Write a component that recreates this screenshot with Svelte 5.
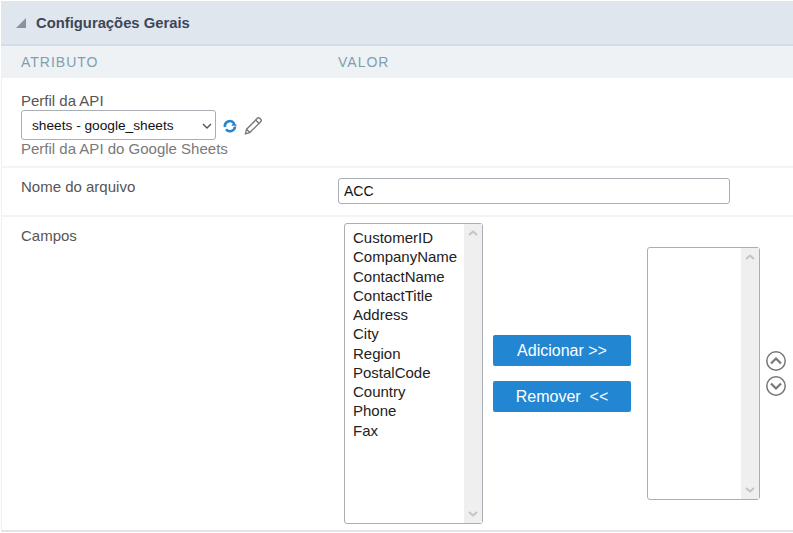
<script lang="ts">
    const fields = [
        "CustomerID",
        "CompanyName",
        "ContactName",
        "ContactTitle",
        "Address",
        "City",
        "Region",
        "PostalCode",
        "Country",
        "Phone",
        "Fax",
    ];
</script>

{#snippet scrollbar()}
    <div class="scrollbar">
        <svg width="10" height="6" viewBox="0 0 10 6" fill="none" stroke="#c4c4c4" stroke-width="2">
            <path d="M1 5l4-3.5L9 5"></path>
        </svg>
        <svg width="10" height="6" viewBox="0 0 10 6" fill="none" stroke="#c4c4c4" stroke-width="2">
            <path d="M1 1l4 3.5L9 1"></path>
        </svg>
    </div>
{/snippet}

<div class="page">
    <div class="title-bar">
        <span class="triangle"></span>
        <span class="title">Configurações Gerais</span>
    </div>

    <div class="head-row">
        <div class="attr">ATRIBUTO</div>
        <div>VALOR</div>
    </div>

    <div class="row row-api">
        <div class="label">Perfil da API</div>
        <div class="select-line">
            <div class="select-wrap">
                <select class="select">
                    <option>sheets - google_sheets</option>
                </select>
                <svg class="chevron" width="10" height="6" viewBox="0 0 10 6" fill="none" stroke="#555" stroke-width="1.4">
                    <path d="M1 1l4 4 4-4"></path>
                </svg>
            </div>
            <svg class="refresh" width="14" height="14" viewBox="0 0 14 14" fill="none">
                <path d="M2 8A5 5 0 0 1 11 4.200" stroke="#2586cf" stroke-width="2.6"></path>
                <path d="M12 7.500A5 5 0 0 1 3 10.200" stroke="#2586cf" stroke-width="2.6"></path>
                <path d="M14 6.800H8.200l2.900-3.600z" fill="#2586cf"></path>
            </svg>
            <svg class="pencil" width="19" height="19" viewBox="0 0 18 18" fill="none" stroke="#777" stroke-width="1.300">
                <path d="M2.400 12.600L12.600 2.200c.7-.7 1.600-.7 2.300 0l.9.9c.7.7.7 1.600 0 2.300L5.500 15.700 1.300 17z" stroke-linejoin="round"></path>
                <path d="M11 3.800l3.400 3.400M2.400 12.600l3.100 3.100"></path>
            </svg>
        </div>
        <div class="hint">Perfil da API do Google Sheets</div>
    </div>

    <div class="row row-name">
        <div class="attr label">Nome do arquivo</div>
        <input class="text-input" type="text" value="ACC" />
    </div>

    <div class="row row-fields">
        <div class="attr label">Campos</div>
        <div class="fields">
            <div class="list list-left">
                <div class="options">
                    {#each fields as field}
                        <div class="option">{field}</div>
                    {/each}
                </div>
                {@render scrollbar()}
            </div>
            <div class="buttons">
                <button class="btn">Adicionar &gt;&gt;</button>
                <button class="btn">Remover &nbsp;&lt;&lt;</button>
            </div>
            <div class="list list-right">
                <div class="options"></div>
                {@render scrollbar()}
            </div>
            <div class="order">
                <svg width="20" height="20" viewBox="0 0 20 20" fill="none" stroke="#777">
                    <circle cx="10" cy="10" r="9.200" stroke-width="1.500"></circle>
                    <path d="M5 12.500L10 7.500l5 5" stroke-width="2.200"></path>
                </svg>
                <svg width="20" height="20" viewBox="0 0 20 20" fill="none" stroke="#777">
                    <circle cx="10" cy="10" r="9.200" stroke-width="1.500"></circle>
                    <path d="M5 7.500l5 5 5-5" stroke-width="2.200"></path>
                </svg>
            </div>
        </div>
    </div>
</div>

<style>
    :global(body) {
        margin: 0;
        background: #fff;
    }

    .page {
        width: 793px;
        height: 533px;
        box-sizing: border-box;
        padding-top: 1px;
        overflow: hidden;
        font-family: "Liberation Sans", Arial, sans-serif;
        font-size: 15px;
        color: #555;
    }

    .title-bar {
        height: 43px;
        margin-left: 1px;
        display: flex;
        align-items: center;
        gap: 10px;
        padding-left: 15px;
        background: #e0e6ed;
        border-bottom: 2px solid #d3dde5;
    }

    .triangle {
        width: 0;
        height: 0;
        border-left: 10px solid transparent;
        border-bottom: 10px solid #8a929c;
    }

    .title {
        font-weight: bold;
        font-size: 14.800px;
        color: #3d4656;
    }

    .head-row {
        height: 32px;
        margin-left: 1px;
        display: flex;
        align-items: center;
        padding-left: 20px;
        background: #eef2f5;
        color: #7f9eb0;
        font-size: 14px;
        letter-spacing: 1px;
    }

    .attr {
        width: 317px;
        flex-shrink: 0;
    }

    .row {
        margin-left: 1px;
        padding-left: 19px;
        border-left: 1px solid #eef2f5;
    }

    .row-api {
        height: 90px;
        box-sizing: border-box;
        padding-top: 15px;
        border-bottom: 2px solid #f2f5f7;
    }

    .label {
        line-height: 16px;
    }

    .select-line {
        display: flex;
        align-items: center;
        height: 30px;
        margin-top: 1px;
    }

    .select-wrap {
        position: relative;
        display: flex;
    }

    .select {
        width: 195px;
        height: 30px;
        padding: 0 10px;
        appearance: none;
        border: 1px solid #a9aeb4;
        border-radius: 3px;
        background: #fff;
        font-family: inherit;
        font-size: 13.700px;
        color: #111;
    }

    .chevron {
        position: absolute;
        right: 4px;
        top: 13px;
        pointer-events: none;
    }

    .refresh {
        margin-left: 7px;
        margin-top: 2px;
    }

    .pencil {
        margin-left: 7px;
    }

    .hint {
        line-height: 18px;
        color: #7a7a7a;
    }

    .row-name {
        height: 49px;
        box-sizing: border-box;
        display: flex;
        padding-top: 10px;
        border-bottom: 2px solid #f2f5f7;
    }

    .row-name .label,
    .row-fields .label {
        margin-top: 1px;
    }

    .text-input {
        width: 392px;
        height: 26px;
        box-sizing: border-box;
        padding: 0 5px;
        border: 1px solid #a9aeb4;
        border-radius: 3px;
        font-family: inherit;
        font-size: 14px;
        color: #111;
    }

    .row-fields {
        height: 315px;
        box-sizing: border-box;
        display: flex;
        padding-top: 10px;
        border-bottom: 2px solid #dfe5ea;
    }

    .fields {
        display: flex;
        align-items: center;
        height: 301px;
        margin-top: -4px;
        margin-left: 6px;
    }

    .list {
        display: flex;
        box-sizing: border-box;
        background: #fff;
        border: 1px solid #a9aeb4;
        border-radius: 3px;
    }

    .list-left {
        width: 139px;
        height: 301px;
    }

    .list-right {
        width: 113px;
        height: 253px;
    }

    .options {
        flex: 1;
        padding-top: 4px;
        padding-left: 8px;
        color: #222;
    }

    .option {
        height: 19.250px;
        line-height: 19.250px;
        white-space: nowrap;
    }

    .scrollbar {
        width: 18px;
        flex-shrink: 0;
        display: flex;
        flex-direction: column;
        justify-content: space-between;
        align-items: center;
        padding: 6px 0;
        box-sizing: border-box;
        background: #efefef;
    }

    .buttons {
        display: flex;
        flex-direction: column;
        gap: 15px;
        margin: 0 16px 0 10px;
    }

    .btn {
        width: 138px;
        height: 31px;
        padding: 0;
        border: none;
        border-radius: 2px;
        background: #2286d2;
        color: #fff;
        font-family: inherit;
        font-size: 16px;
    }

    .order {
        display: flex;
        flex-direction: column;
        gap: 5px;
        margin-left: 6px;
    }
</style>
